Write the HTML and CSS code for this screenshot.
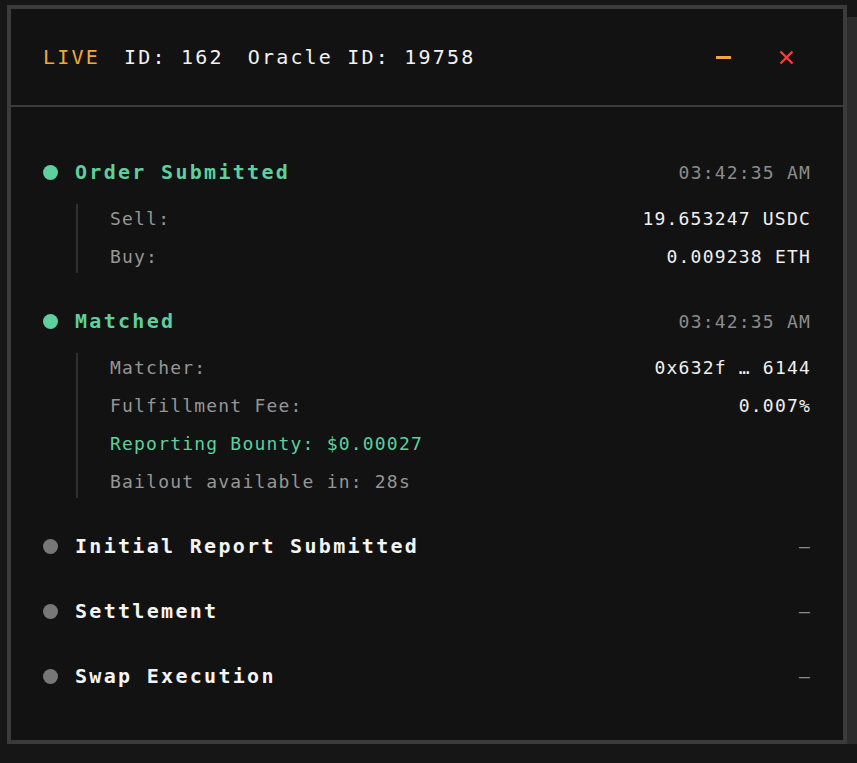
FILE: index.html
```html
<!DOCTYPE html>
<html lang="en">
<head>
    <meta charset="UTF-8">
    <meta name="viewport" content="width=device-width, initial-scale=1.0">
    <title>Order Tracker</title>
    <link rel="stylesheet" href="styles.css">
</head>
<body>
    <div class="page">
        <div class="panel">
            <header class="panel-head">
                <div class="head-info">
                    <span class="live">LIVE</span>
                    <span>ID: 162</span>
                    <span>Oracle ID: 19758</span>
                </div>
                <div class="head-actions">
                    <button class="icon-btn" title="Minimize">
                        <svg width="15" height="15" viewBox="0 0 15 15"><rect x="0" y="6" width="15" height="3" fill="#f0a83a"/></svg>
                    </button>
                    <button class="icon-btn" title="Close">
                        <svg width="15" height="15" viewBox="0 0 15 15"><path d="M1.5 1.5 L13.5 13.5 M13.5 1.5 L1.5 13.5" stroke="#ec4138" stroke-width="2.4" fill="none"/></svg>
                    </button>
                </div>
            </header>

            <ol class="steps">
                <li class="step done">
                    <div class="step-head">
                        <span class="dot"></span>
                        <span class="step-title">Order Submitted</span>
                        <span class="step-time">03:42:35 AM</span>
                    </div>
                    <div class="details">
                        <div class="detail"><span class="label">Sell:</span><span class="value">19.653247 USDC</span></div>
                        <div class="detail"><span class="label">Buy:</span><span class="value">0.009238 ETH</span></div>
                    </div>
                </li>

                <li class="step done">
                    <div class="step-head">
                        <span class="dot"></span>
                        <span class="step-title">Matched</span>
                        <span class="step-time">03:42:35 AM</span>
                    </div>
                    <div class="details">
                        <div class="detail"><span class="label">Matcher:</span><span class="value">0x632f … 6144</span></div>
                        <div class="detail"><span class="label">Fulfillment Fee:</span><span class="value">0.007%</span></div>
                        <div class="detail"><span class="label accent">Reporting Bounty: $0.00027</span></div>
                        <div class="detail"><span class="label">Bailout available in: 28s</span></div>
                    </div>
                </li>

                <li class="step">
                    <div class="step-head">
                        <span class="dot"></span>
                        <span class="step-title">Initial Report Submitted</span>
                        <span class="step-time">—</span>
                    </div>
                </li>

                <li class="step">
                    <div class="step-head">
                        <span class="dot"></span>
                        <span class="step-title">Settlement</span>
                        <span class="step-time">—</span>
                    </div>
                </li>

                <li class="step">
                    <div class="step-head">
                        <span class="dot"></span>
                        <span class="step-title">Swap Execution</span>
                        <span class="step-time">—</span>
                    </div>
                </li>
            </ol>
        </div>
    </div>
</body>
</html>
```

FILE: styles.css
```css
body {
    background-color: #161616;
    color: #f0f0f0;
    font-family: "DejaVu Sans Mono", "Liberation Mono", monospace;
    margin: 0;
    padding: 0;
}

.page {
    padding: 5px 0 0 7px;
}

.panel {
    width: 840px;
    box-sizing: border-box;
    background-color: #121212;
    border: 4px solid #3b3b3b;
    box-shadow: 12px 12px 0 #2c2c2c;
}

/* header */
.panel-head {
    height: 96px;
    display: flex;
    align-items: center;
    justify-content: space-between;
    padding: 0 49px 0 32px;
    border-bottom: 2px solid #3b3b3b;
}

.head-info {
    display: flex;
    gap: 24px;
    font-size: 20px;
    letter-spacing: 2.2px;
    color: #f2f2f2;
}

.live {
    color: #f0a83a;
}

.head-actions {
    display: flex;
    align-items: center;
    gap: 48px;
}

.icon-btn {
    background: none;
    border: none;
    padding: 0;
    cursor: pointer;
    display: flex;
}

/* steps */
.steps {
    list-style: none;
    margin: 0;
    padding: 51px 32px 50px 32px;
    display: flex;
    flex-direction: column;
    gap: 37px;
}

.step-head {
    display: flex;
    align-items: center;
    height: 28px;
}

.dot {
    width: 15px;
    height: 15px;
    border-radius: 50%;
    background-color: #777;
    margin-right: 17px;
    flex-shrink: 0;
}

.step-title {
    font-size: 20px;
    font-weight: bold;
    letter-spacing: 2.3px;
    color: #f4f4f4;
}

.step-time {
    margin-left: auto;
    font-size: 18px;
    letter-spacing: 1.2px;
    color: #8c8c8c;
}

.step.done .dot {
    background-color: #5ecf9d;
}

.step.done .step-title {
    color: #5ecf9d;
}

.details {
    margin: 18px 0 -3px 33px;
    padding: 1px 0 2px 32px;
    border-left: 2px solid #303030;
    display: flex;
    flex-direction: column;
    gap: 10px;
}

.detail {
    display: flex;
    justify-content: space-between;
    line-height: 28px;
    font-size: 18px;
    letter-spacing: 1.2px;
}

.label {
    color: #969696;
}

.label.accent {
    color: #5ecf9d;
}

.value {
    color: #f0f0f0;
}
```
